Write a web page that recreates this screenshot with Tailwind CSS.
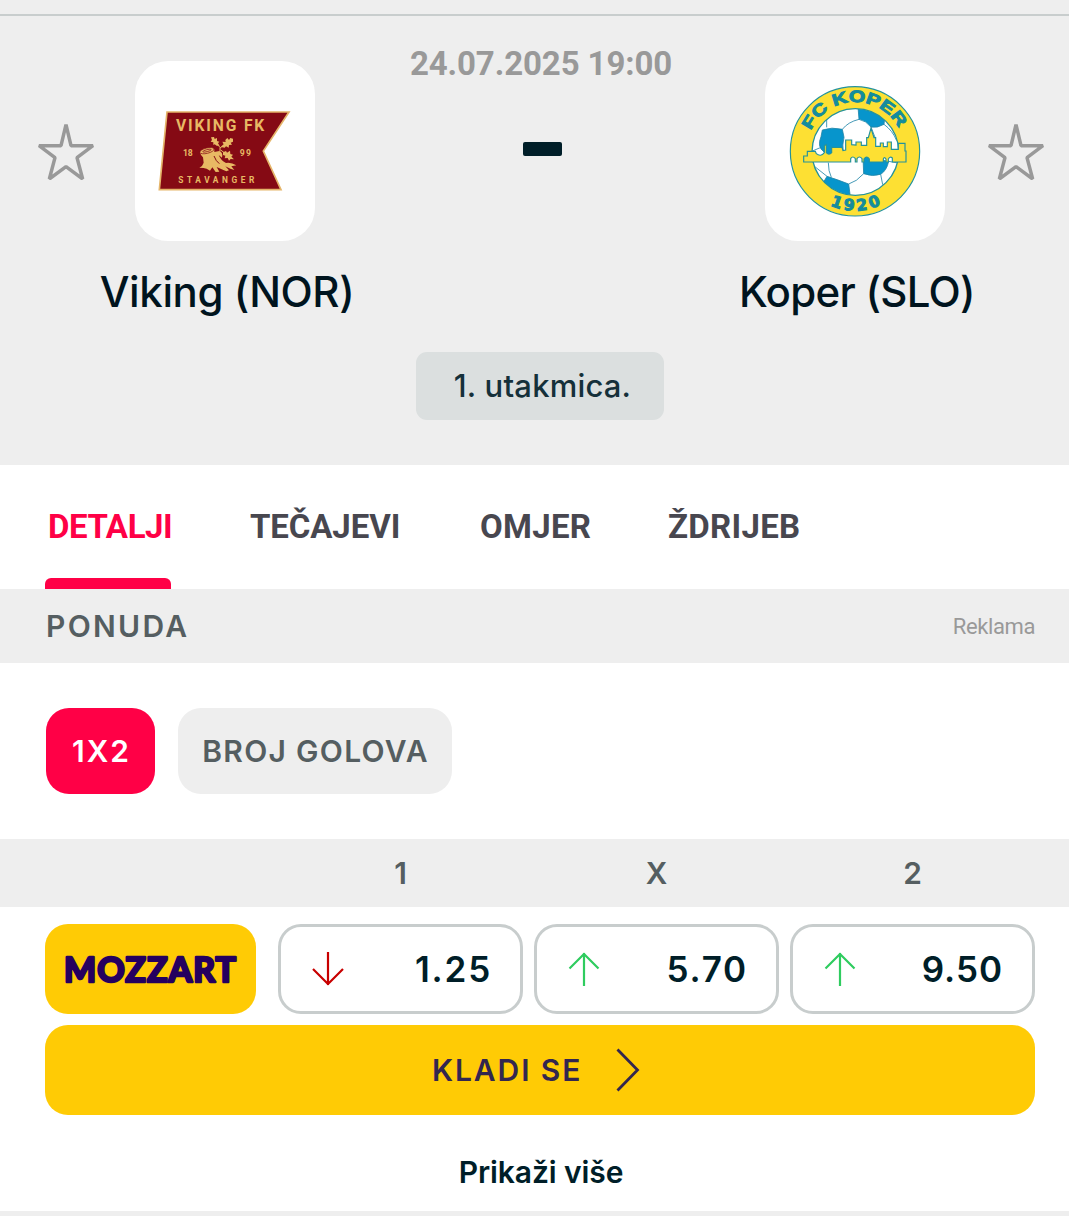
<!DOCTYPE html>
<html lang="hr">
<head>
    <meta charset="UTF-8">
    <meta name="viewport" content="width=device-width, initial-scale=1.0">
    <title>Viking - Koper</title>
    <script src="https://cdn.jsdelivr.net/npm/@tailwindcss/browser@4"></script>
</head>
<body class="bg-white overflow-hidden font-['Inter','Liberation_Sans',sans-serif] text-[#001e28]">
<div class="w-[1080px] h-[1216px] overflow-hidden">

    <!-- Match header -->
    <header class="h-[465px] bg-[#eeeeee] pt-[14px]">
        <div class="h-[2px] bg-[#c8cdcd]"></div>
        <div class="flex h-[336px]">
            <!-- Home team -->
            <div class="w-[450px] pt-[45px] flex flex-col items-center">
                <div class="flex items-center w-full pl-[38px]">
                    <svg class="w-[56px] h-[57px] mr-[41px]" viewBox="114 368 168 171" fill="none" stroke="#999999" stroke-width="10.5" stroke-linejoin="bevel">
                        <path d="M198 373L213 436H279L231 472L248 536L198 499L148 536L165 472L117 436H183Z"/>
                    </svg>
                    <div class="size-[180px] bg-white rounded-[33px]">
                        <svg class="size-full" viewBox="15 33 540 540" font-family="Roboto, sans-serif" font-weight="700" fill="#e8b964">
                            <path d="M111 186H477L400 303L453 419H88Z" fill="#850a14" stroke="#e5b56a" stroke-width="5"/>
                            <text x="138" y="244" font-size="47" textLength="265">VIKING FK</text>
                            <text x="159" y="317" font-size="26" textLength="29">18</text>
                            <text x="329" y="317" font-size="26" textLength="34">99</text>
                            <text x="145" y="399" font-size="25" textLength="228">STAVANGER</text>
                            <!-- stump -->
                            <path d="M211 303Q209 313 219 322L221 338Q219 347 208 353Q222 353 230 356L240 362L247 352L257 366L268 365L260 351L275 358L289 364L297 361L286 349L301 356L313 360L304 349L319 346Q303 336 288 339Q272 331 266 315L276 323Q280 308 268 303L253 306V297Z"/>
                            <ellipse cx="231" cy="302" rx="22" ry="8" transform="rotate(-14 231 302)" stroke="#850a14" stroke-width="2"/>
                            <ellipse cx="231" cy="302" rx="13" ry="3" transform="rotate(-14 231 302)" fill="none" stroke="#850a14" stroke-width="2"/>
                            <path d="M252 318Q258 334 268 341" fill="none" stroke="#850a14" stroke-width="3"/>
                            <path d="M270 304V292L257 278M270 294L290 279M272 300L288 312" fill="none" stroke="#e8b964" stroke-width="3"/>
                            <!-- oak leaves -->
                            <path d="M243 262L252 261L254 267L261 264L261 273L268 275L264 280L269 287L260 287L254 283L250 285L250 277L242 275L246 270Z"/>
                            <path d="M309 266L301 264L297 270L292 264L286 270L287 276L277 275L281 283L273 291L284 293L288 289L296 293L297 285L306 284L302 278L309 275Z"/>
                            <path d="M279 307L288 303L291 308L300 302L301 312L309 314L304 320L312 328L302 327L297 332L293 324L284 325L286 317L279 315Z"/>
                        </svg>
                    </div>
                </div>
                <div class="mt-[25px] pl-[4px] text-[42px] leading-[52px] font-medium tracking-[-0.4px] text-[#00141e] whitespace-nowrap"><span>Viking (NOR)</span></div>
            </div>

            <!-- Kick-off -->
            <div class="w-[180px] pt-[28px] flex flex-col items-center">
                <div class="pl-[2px] font-['Roboto'] text-[33px] leading-[40px] font-bold tracking-[-0.1px] text-[#999999] whitespace-nowrap"><span>24.07.2025 19:00</span></div>
                <div class="mt-[58px] ml-[4px] w-[39px] h-[14px] rounded-[2px] bg-[#001e28]"></div>
            </div>

            <!-- Away team -->
            <div class="w-[450px] pt-[45px] flex flex-col items-center">
                <div class="flex items-center w-full pl-[135px]">
                    <div class="size-[180px] bg-white rounded-[33px]">
                        <svg class="size-full" viewBox="15 33 540 540">
                            <defs>
                                <path id="arcTop" d="M153 242A146 146 0 0 1 419 242"/>
                                <path id="arcBottom" d="M210 466A178 178 0 0 0 370 460"/>
                                <clipPath id="ball"><circle cx="286" cy="306" r="130"/></clipPath>
                            </defs>
                            <circle cx="285" cy="304" r="194" fill="#fde033" stroke="#24929b" stroke-width="3.5"/>
                            <circle cx="286" cy="306" r="130" fill="#fff"/>
                            <g clip-path="url(#ball)" fill="#0795cc" stroke="#2186a8" stroke-width="2.5">
                                <path d="M294 170L297 208Q318 212 333 231Q352 235 372 223L376 190Z"/>
                                <path d="M187 240Q215 230 247 238L252 262Q246 286 250 306L205 312L192 306Q170 290 183 260Z"/>
                                <path d="M309 320Q328 316 340 326L386 334Q380 362 362 373Q338 381 311 371Z"/>
                                <path d="M186 404L201 379Q230 388 266 402L271 440Q220 440 186 404Z"/>
                                <path d="M200 190V232M297 208Q264 216 247 238M372 223Q398 242 410 272M333 231L345 262M155 304L183 292M162 348L201 379M205 338Q205 364 214 382M266 402Q290 395 311 371M362 373L368 404M386 334L420 340" fill="none"/>
                            </g>
                            <circle cx="286" cy="306" r="130" fill="none" stroke="#24929b" stroke-width="4"/>
                            <!-- skyline -->
                            <path d="M131 336V318H142V304H166L169 311Q182 322 193 308V286L199 284V308Q207 317 215 308V292H246L249 302L257 300V270H275V284L288 285V276H304V286H320V263H325L333 234L342 263H347V289H361V279H370V290H382V276H394V298H415V280H435V303H438V336H397V324Q390 318 385 327V336H378V327Q373 319 370 327V336H328V327Q320 315 312 327V336H306V326Q298 316 291 326V336H286V326Q278 316 272 326V336Z" fill="#fde033" stroke="#24929b" stroke-width="3.5"/>
                            <g font-family="'DejaVu Sans', sans-serif" font-weight="700" fill="#148c9c" stroke="#148c9c" stroke-width="3">
                                <text font-family="'Liberation Sans', sans-serif" font-size="49"><textPath href="#arcTop" textLength="326" lengthAdjust="spacingAndGlyphs">FC KOPER</textPath></text>
                                <text font-size="47"><textPath href="#arcBottom" textLength="158">1920</textPath></text>
                            </g>
                        </svg>
                    </div>
                    <svg class="w-[56px] h-[57px] ml-[43px]" viewBox="114 368 168 171" fill="none" stroke="#999999" stroke-width="10.5" stroke-linejoin="bevel">
                        <path d="M198 373L213 436H279L231 472L248 536L198 499L148 536L165 472L117 436H183Z"/>
                    </svg>
                </div>
                <div class="mt-[25px] pl-[4px] text-[42px] leading-[52px] font-medium tracking-[-0.7px] text-[#00141e] whitespace-nowrap"><span>Koper (SLO)</span></div>
            </div>
        </div>
        <div class="mx-auto w-[248px] h-[68px] rounded-[11px] bg-[#dbdfdf] flex items-center justify-center text-[31px] font-medium text-[#15303a] pl-[5px] tracking-[0.2px]"><span>1. utakmica.</span></div>
    </header>

    <!-- Tabs -->
    <nav class="h-[124px] flex pl-[45px] font-['Roboto'] text-[33px] leading-[40px] font-bold text-[#48474f] whitespace-nowrap">
        <a class="w-[126px] flex flex-col justify-between pt-[42px] text-[#ff0046]"><span class="pl-[3px] tracking-[-0.4px]">DETALJI</span><i class="h-[11px] rounded-t-[6px] bg-[#ff0046]"></i></a>
        <a class="pt-[42px] w-[231px] pl-[79px] tracking-[-0.1px]"><span>TEČAJEVI</span></a>
        <a class="pt-[42px] w-[189px] pl-[78px] tracking-[0.3px]"><span>OMJER</span></a>
        <a class="pt-[42px] pl-[77px] tracking-[0.3px]"><span>ŽDRIJEB</span></a>
    </nav>

    <!-- Section title -->
    <div class="h-[74px] bg-[#eeeeee] flex items-center justify-between pl-[46px] pr-[45px]">
        <h2 class="text-[30px] font-semibold tracking-[2.3px] text-[#555e61]"><span>PONUDA</span></h2>
        <span class="font-['Roboto'] text-[22px] tracking-[-0.4px] text-[#999999]">Reklama</span>
    </div>

    <!-- Market buttons -->
    <div class="h-[176px] pt-[45px] pl-[46px] flex gap-[23px] text-[30px] font-semibold">
        <button class="w-[109px] h-[86px] rounded-[23px] bg-[#ff0046] text-white tracking-[2px] pl-[2px]"><span>1X2</span></button>
        <button class="w-[274px] h-[86px] rounded-[23px] bg-[#eeeeee] text-[#555e61] tracking-[1.3px] pl-[1px] whitespace-nowrap"><span>BROJ GOLOVA</span></button>
    </div>

    <!-- Odds header -->
    <div class="h-[68px] bg-[#eeeeee] grid grid-cols-[245px_245px_245px] gap-[11px] pl-[278px] items-center text-center text-[30px] font-semibold text-[#555e61]">
        <span>1</span><span>X</span><span>2</span>
    </div>

    <!-- Odds -->
    <div class="pt-[17px] pl-[45px] flex">
        <div class="w-[211px] h-[90px] mr-[22px] rounded-[23px] bg-[#ffcb05]">
            <svg class="size-full" viewBox="0 0 211 90">
                <text x="19" y="57.500" font-family="Lato, sans-serif" font-weight="700" font-size="34" textLength="172" fill="#25005f" stroke="#25005f" stroke-width="2.6" stroke-linejoin="round">MOZZART</text>
            </svg>
        </div>
        <div class="flex gap-[11px] text-[35px] font-semibold tracking-[1.8px]">
            <div class="w-[245px] h-[90px] rounded-[23px] border-[3px] border-[#c8cdcd] flex items-center justify-between pl-[31px] pr-[28px]">
                <svg class="w-[34px] h-[36px]" viewBox="0 0 34 36" fill="none" stroke="#c80000" stroke-width="2.2"><path d="M16 1V34M1 18L16 33L31 18"/></svg>
                <span>1.25</span>
            </div>
            <div class="w-[245px] h-[90px] rounded-[23px] border-[3px] border-[#c8cdcd] flex items-center justify-between pl-[31px] pr-[28px]">
                <svg class="w-[34px] h-[36px]" viewBox="0 0 34 36" fill="none" stroke="#2fcc5f" stroke-width="2.2"><path d="M16 35V2M1.500 17.500L16 3L30.500 17.500"/></svg>
                <span>5.70</span>
            </div>
            <div class="w-[245px] h-[90px] rounded-[23px] border-[3px] border-[#c8cdcd] flex items-center justify-between pl-[31px] pr-[29px] tracking-[1px]">
                <svg class="w-[34px] h-[36px]" viewBox="0 0 34 36" fill="none" stroke="#2fcc5f" stroke-width="2.2"><path d="M16 35V2M1.500 17.500L16 3L30.500 17.500"/></svg>
                <span>9.50</span>
            </div>
        </div>
    </div>

    <!-- Bet button -->
    <button class="mt-[11px] ml-[45px] w-[990px] h-[90px] rounded-[23px] bg-[#ffcb05] flex items-center pl-[387px] text-[30px] font-semibold tracking-[1.9px] text-[#33264f]">
        <span class="w-[184px] text-left whitespace-nowrap">KLADI SE</span>
        <svg class="w-[26px] h-[44px]" viewBox="0 0 26 44" fill="none" stroke="#33264f" stroke-width="2.800"><path d="M1.500 1.500L21.500 22L1.500 42.500"/></svg>
    </button>

    <div class="h-[96px] pt-[37px] pl-[2px] text-center text-[30px] leading-[40px] font-semibold tracking-[-0.1px]"><span>Prikaži više</span></div>
    <div class="h-[10px] bg-[#eeeeee]"></div>
</div>
</body>
</html>
